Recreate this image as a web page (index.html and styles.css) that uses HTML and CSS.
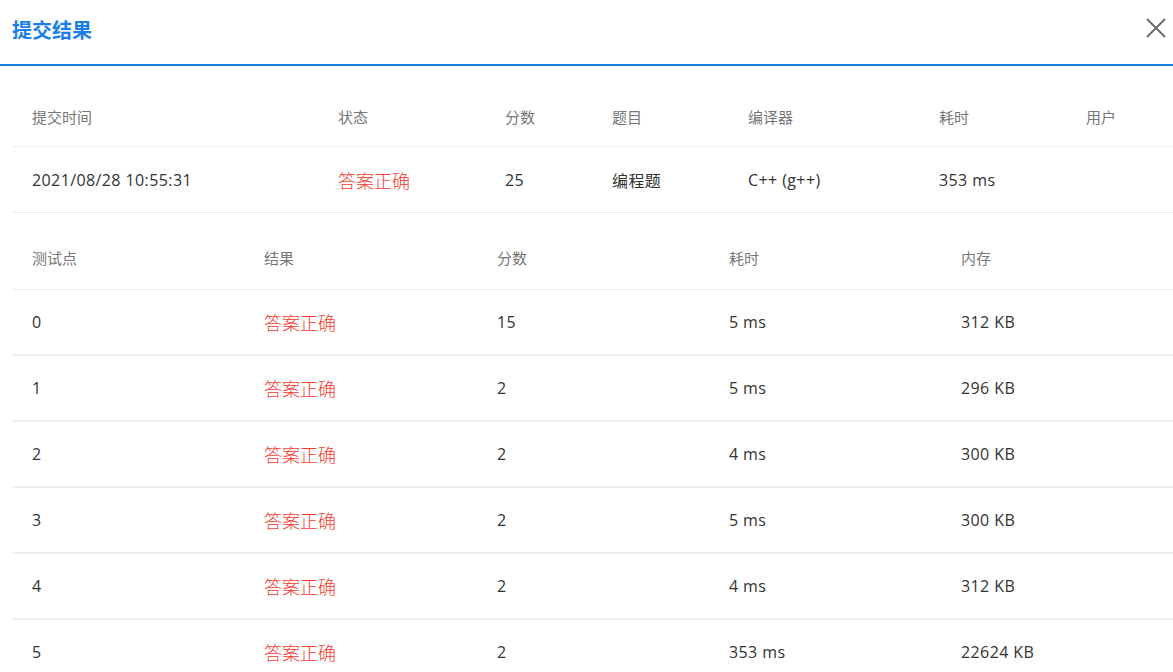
FILE: index.html
```html
<!DOCTYPE html>
<html lang="zh">
<head>
<meta charset="utf-8">
<link rel="stylesheet" href="styles.css">
</head>
<body>
<div class="dialog">
  <div class="head">
    <div class="title">提交结果</div>
    <svg class="close" width="20" height="20" viewBox="0 0 20 20"><path d="M1 1L19 19M19 1L1 19" stroke="#6e6e6e" stroke-width="2" fill="none"/></svg>
  </div>
  <div class="body">
    <div class="table t1">
      <div class="row hrow">
        <div>提交时间</div><div>状态</div><div>分数</div><div>题目</div><div>编译器</div><div>耗时</div><div>用户</div>
      </div>
      <div class="row drow">
        <div>2021/08/28 10:55:31</div><div class="ok">答案正确</div><div>25</div><div>编程题</div><div>C++ (g++)</div><div>353 ms</div><div></div>
      </div>
    </div>
    <div class="table t2">
      <div class="row hrow">
        <div>测试点</div><div>结果</div><div>分数</div><div>耗时</div><div>内存</div>
      </div>
      <div class="row drow"><div>0</div><div class="ok">答案正确</div><div>15</div><div>5 ms</div><div>312 KB</div></div>
      <div class="row drow"><div>1</div><div class="ok">答案正确</div><div>2</div><div>5 ms</div><div>296 KB</div></div>
      <div class="row drow"><div>2</div><div class="ok">答案正确</div><div>2</div><div>4 ms</div><div>300 KB</div></div>
      <div class="row drow"><div>3</div><div class="ok">答案正确</div><div>2</div><div>5 ms</div><div>300 KB</div></div>
      <div class="row drow"><div>4</div><div class="ok">答案正确</div><div>2</div><div>4 ms</div><div>312 KB</div></div>
      <div class="row drow"><div>5</div><div class="ok">答案正确</div><div>2</div><div>353 ms</div><div>22624 KB</div></div>
    </div>
  </div>
</div>
</body>
</html>
```

FILE: styles.css
```css
html, body {
  margin: 0;
  padding: 0;
  background: #fff;
  overflow: hidden;
}
body {
  font-family: "Open Sans", "Noto Sans CJK SC", sans-serif;
  color: #333;
  width: 1173px;
  height: 672px;
}
.dialog {
  width: 1173px;
  height: 672px;
  overflow: hidden;
}
.head {
  height: 64px;
  border-bottom: 2px solid #1a7ee8;
  display: flex;
  align-items: center;
  justify-content: space-between;
  padding: 0 7px 0 12px;
}
.title {
  font-family: "Noto Sans CJK SC", sans-serif;
  font-weight: 700;
  font-size: 20px;
  color: #1a7ee8;
  margin-top: -6px;
}
.close {
  margin-top: -9px;
}
.body {
  padding: 20px 0 0 12px;
}
.table {
  width: 1162px;
}
.row {
  display: grid;
  align-items: center;
}
.t1 .row {
  grid-template-columns: 306px 167px 107px 136px 191px 147px 108px;
}
.t2 .row {
  grid-template-columns: 232px 233px 232px 232px 233px;
}
.row > div {
  padding-left: 20px;
  white-space: nowrap;
}
.hrow {
  font-family: "Noto Sans CJK SC", sans-serif;
  font-size: 15px;
  color: #777;
  border-bottom: 1px solid #eee;
}
.t1 .hrow {
  height: 60px;
}
.t1 .drow {
  height: 65px;
  border-bottom: 1px solid #eee;
}
.t2 {
  margin-top: 13px;
}
.t2 .hrow {
  height: 63px;
}
.t2 .drow {
  height: 64px;
  border-bottom: 2px solid #eee;
}
.drow {
  font-size: 16px;
  letter-spacing: 0.4px;
  color: #333;
}
.ok {
  font-family: "Noto Sans CJK SC", sans-serif;
  font-size: 18px;
  font-weight: 300;
  letter-spacing: 0;
  color: #f5392f;
}
```
